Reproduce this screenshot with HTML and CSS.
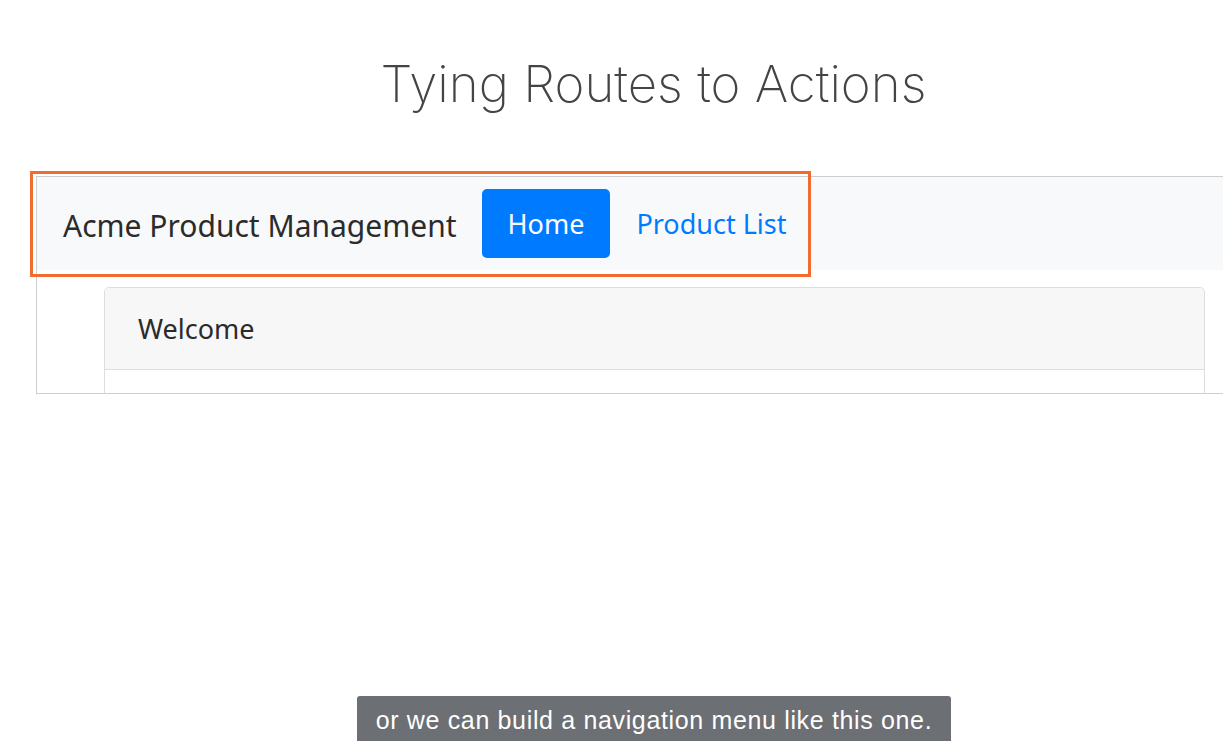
FILE: index.html
```html
<!DOCTYPE html>
<html>
<head>
<meta charset="utf-8">
<link rel="stylesheet" href="styles.css">
</head>
<body>
<h1 class="title">Tying Routes to Actions</h1>
<div class="frame">
  <nav class="navbar">
    <span class="brand">Acme Product Management</span>
    <a class="nav-link active">Home</a>
    <a class="nav-link">Product List</a>
  </nav>
  <div class="card">
    <div class="card-header">Welcome</div>
    <div class="card-body"></div>
  </div>
</div>
<div class="highlight"></div>
<div class="caption">or we can build a navigation menu like this one.</div>
</body>
</html>
```
FILE: styles.css
```css
html, body { margin: 0; padding: 0; background: #fff; }
body { width: 1223px; height: 741px; position: relative; overflow: hidden; }
.title {
  margin: 0;
  padding: 52px 0 0 84px;
  height: 176px;
  box-sizing: border-box;
  text-align: center;
  font-family: Inter, "Noto Sans", sans-serif;
  font-weight: 250;
  font-size: 51px;
  line-height: 64px;
  color: #444;
  letter-spacing: 0;
}
.frame {
  margin-left: 36px;
  height: 218px;
  box-sizing: border-box;
  border: 1px solid #cfcfcf;
  border-right: none;
  overflow: hidden;
}
.navbar {
  height: 93px;
  background: #f8f9fa;
  display: flex;
  align-items: center;
  padding-left: 26px;
  font-family: "Noto Sans", sans-serif;
}
.brand { font-size: 30px; color: #2b2b2b; margin-right: 25px; padding-top: 4px; }
.nav-link {
  font-size: 27px;
  color: #007bff;
  padding: 0 26px;
  height: 69px;
  display: flex;
  align-items: center;
  border-radius: 5px;
}
.nav-link.active { background: #007bff; color: #fff; }
.card {
  margin: 17px 18px 0 67px;
  border: 1px solid #dedede;
  border-radius: 5px;
  font-family: "Noto Sans", sans-serif;
}
.card-header {
  height: 82px;
  box-sizing: border-box;
  background: #f7f7f7;
  border-bottom: 1px solid #dedede;
  padding-left: 33px;
  display: flex;
  align-items: center;
  font-size: 27px;
  color: #2b2b2b;
  border-radius: 5px 5px 0 0;
}
.card-body { height: 40px; }
.highlight {
  position: absolute;
  left: 30px; top: 171px;
  width: 781px; height: 106px;
  box-sizing: border-box;
  border: 3px solid #f36c2f;
}
.caption {
  position: absolute;
  left: 357px; top: 696px;
  width: 594px; height: 50px;
  box-sizing: border-box;
  background: #6c6f73;
  border-radius: 3px 3px 0 0;
  color: #fff;
  font-family: "Liberation Sans", Arial, sans-serif;
  font-size: 25px;
  letter-spacing: 0.65px;
  text-align: center;
  padding-top: 10px;
}
```
